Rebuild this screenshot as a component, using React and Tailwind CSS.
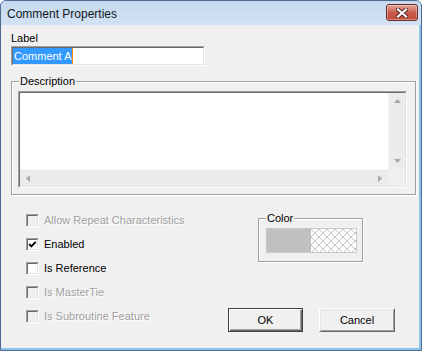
import React from "react";

const Checkbox = ({ label, checked, disabled }) => (
  <div className="flex items-center h-[13px] gap-[5px]">
    <span className="flex w-[13px] h-[13px] border border-t-[#a0a0a0] border-l-[#a0a0a0] border-b-white border-r-white">
      <span
        className={`flex flex-1 items-center justify-center border border-t-[#696969] border-l-[#696969] border-b-[#e3e3e3] border-r-[#e3e3e3] ${
          disabled ? "bg-[#f0f0f0]" : "bg-white"
        }`}
      >
        {checked && (
          <svg width="9" height="9" viewBox="0 0 9 9">
            <polyline points="1.2,4 3.4,6.3 7.8,1.8" fill="none" stroke="#000" strokeWidth="1.9" />
          </svg>
        )}
      </span>
    </span>
    <span className={disabled ? "text-[#a0a0a0] [text-shadow:1px_1px_0_#fff]" : "text-black"}>{label}</span>
  </div>
);

const Arrow = ({ dir }) => {
  const pts = {
    up: "0,4 3.5,0 7,4",
    down: "0,0 7,0 3.5,4",
    left: "4,0 4,7 0,3.5",
    right: "0,0 4,3.5 0,7",
  }[dir];
  const v = dir === "up" || dir === "down";
  return (
    <svg width={v ? 7 : 4} height={v ? 4 : 7} viewBox={v ? "0 0 7 4" : "0 0 4 7"}>
      <polygon points={pts} fill="#a8a8a8" />
    </svg>
  );
};

// etched group box, caption sits over the top line
const Group = ({ title, className, children }) => (
  <div className={`relative border border-[#a0a0a0] shadow-[inset_1px_1px_0_#fff,1px_1px_0_#fff] ${className}`}>
    <span className="absolute -top-[7px] left-[7px] px-[1px] leading-[13px] bg-[#f0f0f0]">{title}</span>
    {children}
  </div>
);

export default function App() {
  return (
    <div className="w-[422px] h-[351px] flex flex-col rounded-t-[6px] border border-[#4d6b90] bg-[#8cc4ee] overflow-hidden font-['Liberation_Sans',Arial,sans-serif] text-[11px] leading-[13px] text-black">
      {/* title bar */}
      <div className="h-[24px] shrink-0 flex items-center justify-between pl-[6px] pr-[3px] bg-gradient-to-b from-[#c6d9ee] to-[#d2e2f4]">
        <span className="text-[12px] leading-[16px] text-[#101820] pt-[2px]">Comment Properties</span>
        <button className="self-start mt-[3px] w-[32px] h-[17px] flex items-center justify-center rounded-[3px] border border-[#6b2b2b] bg-gradient-to-b from-[#e9a99b] via-[#c95b4b] to-[#c24a38] shadow-[inset_0_0_0_1px_rgba(255,255,255,0.35)]">
          <svg width="12" height="10" viewBox="0 0 12 10">
            <path d="M2 1.5 L10 8.5 M10 1.5 L2 8.5" stroke="#5a2020" strokeWidth="4" strokeLinecap="square" />
            <path d="M2 1.5 L10 8.5 M10 1.5 L2 8.5" stroke="#fff" strokeWidth="2.2" strokeLinecap="square" />
          </svg>
        </button>
      </div>

      {/* client area */}
      <div className="flex-1 mr-[2px] mb-[2px] bg-[#f0f0f0] pl-[10px] pt-[7px] flex flex-col">
        <div>Label</div>
        <div className="mt-[1px] w-[194px] h-[20px] flex border border-t-[#a0a0a0] border-l-[#a0a0a0] border-b-white border-r-white">
          <div className="flex-1 flex bg-white border border-t-[#696969] border-l-[#696969] border-b-[#e3e3e3] border-r-[#e3e3e3]">
            <span className="bg-[#3399ff] text-white leading-[16px] pl-[1px] pr-[1px]">Comment A</span>
            <span className="w-[1px] bg-[#ff8a00]" />
          </div>
        </div>

        <Group title="Description" className="mt-[15px] w-[405px] h-[114px] pl-[6px] pt-[9px]">
          <div className="w-[389px] h-[97px] flex border border-t-[#a0a0a0] border-l-[#a0a0a0] border-b-white border-r-white">
            <div className="flex-1 grid grid-cols-[1fr_17px] grid-rows-[1fr_17px] border border-t-[#696969] border-l-[#696969] border-b-[#e3e3e3] border-r-[#e3e3e3]">
              <div className="bg-white" />
              <div className="bg-[#ebebeb] border-l border-[#f6f6f6] flex flex-col justify-between items-center py-[6px]">
                <Arrow dir="up" />
                <Arrow dir="down" />
              </div>
              <div className="bg-[#ebebeb] border-t border-[#f6f6f6] flex justify-between items-center px-[6px]">
                <Arrow dir="left" />
                <Arrow dir="right" />
              </div>
              <div className="bg-[#f0f0f0]" />
            </div>
          </div>
        </Group>

        <div className="flex">
          <div className="w-[202px] ml-[15px] pt-[19px] flex flex-col gap-[11px]">
            <Checkbox label="Allow Repeat Characteristics" disabled />
            <Checkbox label="Enabled" checked />
            <Checkbox label="Is Reference" />
            <Checkbox label="Is MasterTie" disabled />
            <Checkbox label="Is Subroutine Feature" disabled />
          </div>

          <div className="flex flex-col">
            <Group title="Color" className="ml-[30px] mt-[23px] w-[105px] h-[44px] pl-[7px] pt-[9px]">
              <div className="w-[91px] h-[25px] flex border border-[#c8c8c8]">
                <div className="w-[44px] bg-[#c0c0c0]" />
                <svg className="flex-1 h-full" width="45" height="23">
                  <defs>
                    <pattern id="hatch" width="8" height="8" patternUnits="userSpaceOnUse">
                      <rect width="8" height="8" fill="#fff" />
                      <path d="M0 0 L8 8 M8 0 L0 8" stroke="#c4c4c4" strokeWidth="1" />
                    </pattern>
                  </defs>
                  <rect width="100%" height="100%" fill="url(#hatch)" />
                </svg>
              </div>
            </Group>

            <div className="mt-[46px] flex gap-[16px]">
              <button className="w-[75px] h-[24px] border border-[#404040] bg-[#f0f0f0] shadow-[inset_1px_1px_0_#fff,inset_-1px_-1px_0_#696969,inset_-2px_-2px_0_#a0a0a0] text-black">
                OK
              </button>
              <button className="w-[76px] h-[24px] border border-t-white border-l-white border-b-[#696969] border-r-[#696969] bg-[#f0f0f0] shadow-[inset_1px_1px_0_#e3e3e3,inset_-1px_-1px_0_#a0a0a0] text-black">
                Cancel
              </button>
            </div>
          </div>
        </div>
      </div>
    </div>
  );
}
